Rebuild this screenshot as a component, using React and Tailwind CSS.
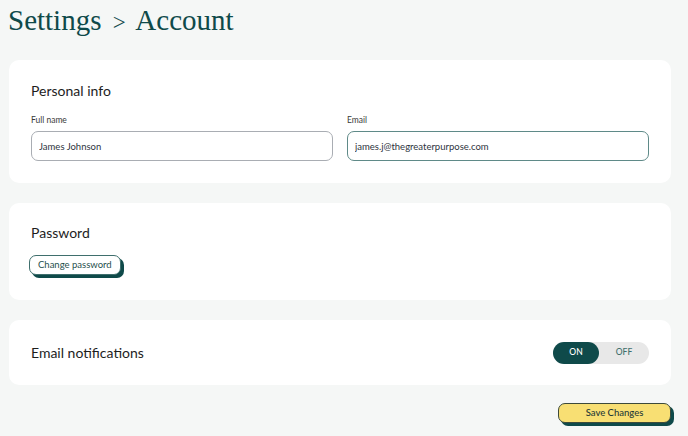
import React, { useState } from "react";

const sans = { fontFamily: 'Lato, "Noto Sans", sans-serif' };

export default function App() {
  const [form, setForm] = useState({
    fullName: "James Johnson",
    email: "james.j@thegreaterpurpose.com",
  });
  const [notify, setNotify] = useState(true);

  const onChange = (e) => setForm((prev) => ({ ...prev, [e.target.name]: e.target.value }));

  return (
    <div className="h-[436px] w-[688px] overflow-hidden bg-[#f5f7f6] pl-[9px] pr-[17px]" style={sans}>
      <h1
        className="-ml-[1px] pt-[2px] text-[29px] leading-[36px] text-[#0f4a4a]"
        style={{ fontFamily: '"Liberation Serif", "DejaVu Serif", serif' }}
      >
        Settings <span className="mx-[4px] text-[23px]">&gt;</span> Account
      </h1>

      <section className="mt-[19px] h-[123px] rounded-[10px] bg-white px-[22px] pt-[21px]">
        <h2 className="text-[14px] leading-[20px] text-[#1d1d1d]">Personal info</h2>
        <div className="mt-[13px] grid grid-cols-2 gap-[14px]">
          <label className="block">
            <span className="block text-[8.5px] leading-[12px] text-[#3a3a3a]">Full name</span>
            <input
              name="fullName"
              value={form.fullName}
              onChange={onChange}
              className="mt-[5px] h-[30px] w-full rounded-[7px] border border-[#a9adb3] px-[7px] text-[9.5px] text-[#2e3440] outline-none"
            />
          </label>
          <label className="block">
            <span className="block text-[8.5px] leading-[12px] text-[#3a3a3a]">Email</span>
            <input
              name="email"
              value={form.email}
              onChange={onChange}
              className="mt-[5px] h-[30px] w-full rounded-[7px] border border-[#5f8a88] px-[7px] text-[9.5px] text-[#2e3440] outline-none"
            />
          </label>
        </div>
      </section>

      <section className="mt-[20px] h-[97px] rounded-[10px] bg-white px-[20px] pt-[20px]">
        <h2 className="ml-[2px] text-[14px] leading-[20px] text-[#1d1d1d]">Password</h2>
        <button className="mt-[12px] h-[20px] rounded-[7px] border border-[#3f6f6d] bg-white px-[8px] text-[9.5px] text-[#1f4f4d] shadow-[3px_3px_0_#0f4a4a]">
          Change password
        </button>
      </section>

      <section className="mt-[20px] flex h-[65px] items-center justify-between rounded-[10px] bg-white pl-[22px] pr-[22px]">
        <h2 className="text-[14px] leading-[20px] text-[#1d1d1d]">Email notifications</h2>
        <div className="flex h-[22px] w-[96px] rounded-full bg-[#e8e8e8] text-[8.5px] font-medium">
          <button
            onClick={() => setNotify(true)}
            className={notify ? "w-[46px] rounded-full bg-[#0f4a4a] text-white" : "w-[46px] rounded-full text-[#3f6f6d]"}
          >
            ON
          </button>
          <button
            onClick={() => setNotify(false)}
            className={!notify ? "flex-1 rounded-full bg-[#0f4a4a] text-white" : "flex-1 rounded-full text-[#3f6f6d]"}
          >
            OFF
          </button>
        </div>
      </section>

      <div className="mt-[18px] flex justify-end">
        <button className="h-[20px] w-[113px] rounded-[7px] border border-[#3d4a3a] bg-[#f8df73] text-[9.5px] font-medium text-[#1f3a36] shadow-[3px_3px_0_#0f4a4a]">
          Save Changes
        </button>
      </div>
    </div>
  );
}
